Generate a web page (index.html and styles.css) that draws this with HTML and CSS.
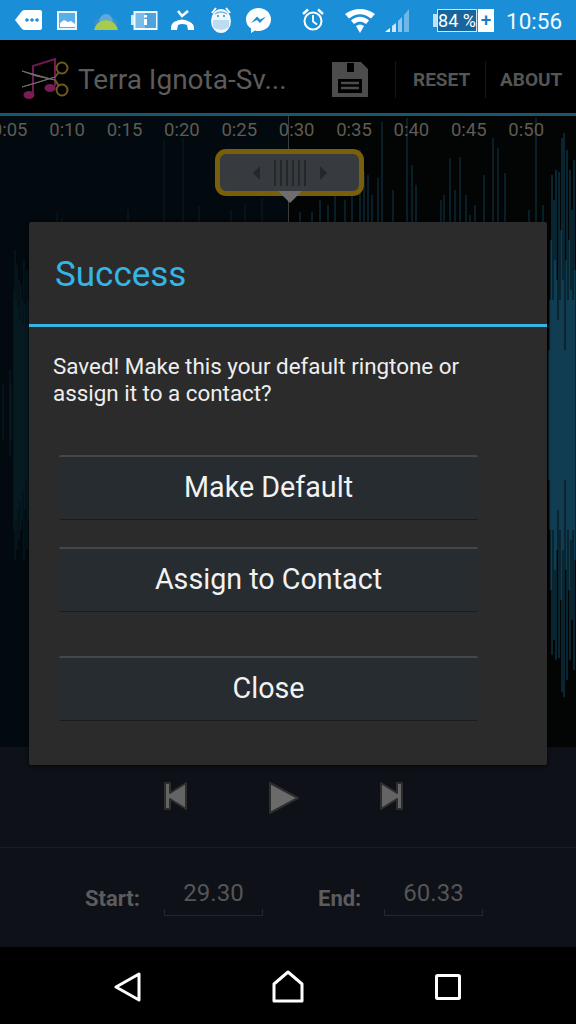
FILE: index.html
```html
<!DOCTYPE html>
<html lang="en">
<head>
  <meta charset="UTF-8">
  <meta name="viewport" content="width=device-width, initial-scale=1.0">
  <title>Ringtone Maker</title>
  <link rel="stylesheet" href="styles.css">
</head>
<body>
  <div class="status">
    <svg width="42" height="40" viewBox="0 0 42 40"><path d="M0 20L7 11Q8 10 10 10H25Q27 10 27 12V28Q27 30 25 30H10Q8 30 7 29Z" fill="#fff"/><circle cx="12" cy="20" r="1.8" fill="#1a8fd8"/><circle cx="17" cy="20" r="1.8" fill="#1a8fd8"/><circle cx="22" cy="20" r="1.8" fill="#1a8fd8"/></svg>
    <svg width="36" height="40" viewBox="0 0 36 40"><rect x="1" y="12" width="18" height="17" fill="#58aee6" stroke="#eaf5fc" stroke-width="2"/><path d="M3 26V23L7 20L11 22L14 21L18 24V27H3Z" fill="#fff"/></svg>
    <svg width="38" height="40" viewBox="0 0 38 40"><path d="M6 22Q7 14 13 14Q19 14 20 22Z" fill="#5fa8d8"/><path d="M1 22L6 18V25H2ZM25 22L20 18V25H24Z" fill="#3e90c4"/><path d="M1 30Q3 21 13 20Q23 21 25 30Z" fill="#a6cb4e"/></svg>
    <svg width="39" height="40" viewBox="0 0 39 40"><path d="M0 15H3V25H0Z" fill="#cfe8f8"/><rect x="3.500" y="12" width="22" height="17" fill="#78bcea" stroke="#f2f9fd" stroke-width="2"/><rect x="14" y="13" width="11" height="15" fill="#4da3dd"/><rect x="13" y="19" width="3" height="6" fill="#fff"/><rect x="13" y="15" width="3" height="2.500" fill="#fff"/></svg>
    <svg width="40" height="40" viewBox="0 0 40 40"><path d="M8 11L12 16L18 11" fill="none" stroke="#fff" stroke-width="2.500"/><path d="M1 28Q1 24 4 22Q12 17 20 22Q24 24 24 28V30H18L17 25Q12 23 8 25L7 30H1Z" fill="#fff"/></svg>
    <svg width="36" height="40" viewBox="0 0 36 40"><ellipse cx="11" cy="21" rx="10" ry="12" fill="#f2f8fc"/><path d="M2 13L6 8M20 13L16 8" stroke="#fff" stroke-width="2"/><path d="M3 20H19V27Q11 33 3 27Z" fill="#bcdcf2"/><path d="M5 14Q11 10 17 14" fill="none" stroke="#7fbce6" stroke-width="1.500"/><circle cx="8" cy="16" r="1" fill="#1a8fd8"/><circle cx="14" cy="16" r="1" fill="#1a8fd8"/></svg>
    <svg width="56" height="40" viewBox="0 0 56 40"><path d="M12.500 8C19.500 8 25 13 25 19.500C25 26 19.500 31 12.500 31Q10.500 31 9 30.500L5 33V28.500Q0 25 0 19.500C0 13 5.500 8 12.500 8Z" fill="#fff"/><path d="M5 23L11 16.500L14 19.500L20 16.500L14 23L11 20Z" fill="#1a8fd8"/></svg>
    <svg width="43" height="40" viewBox="0 0 43 40"><circle cx="11" cy="21" r="8.500" fill="none" stroke="#fff" stroke-width="2"/><path d="M11 15V21.500L15 24.500" fill="none" stroke="#fff" stroke-width="1.800"/><path d="M1 14L6 9.500M21 14L16 9.500" stroke="#fff" stroke-width="2.400"/></svg>
    <svg width="40" height="40" viewBox="0 0 40 40"><path d="M0 14Q15 4 30 14L26 18.500Q15 10 4 18.500Z" fill="#fff"/><path d="M6 20.500Q15 13 24 20.500L21 24Q15 19 9 24Z" fill="#fff"/><path d="M11 26Q15 23 19 26L15 33Z" fill="#fff"/></svg>
    <svg width="48" height="40" viewBox="0 0 48 40"><path d="M0 32L5 28V32Z" fill="#fff"/><path d="M7 26L11 23V32H7Z" fill="#cfe6f6"/><path d="M13 21L17 17V32H13Z" fill="#8cc6ec"/><path d="M19 15L24 9V32H19Z" fill="#6fb7e6"/></svg>
    <div class="battery">
      <span class="batt-nub"></span>
      <span class="batt-level">84 %</span>
      <span class="batt-plus">+</span>
    </div>
    <span class="clock">10:56</span>
  </div>

  <div class="actionbar">
    <svg class="app-icon" width="48" height="42" viewBox="0 0 48 42"><path d="M11 35V8L33 1V28" fill="none" stroke="#6d1a4c" stroke-width="2"/><ellipse cx="7" cy="37" rx="5.500" ry="4" fill="#7a1c55"/><ellipse cx="28" cy="30" rx="5.500" ry="4" fill="#7a1c55"/><path d="M0 13L33 22L14 18ZM0 29L33 19L14 25Z" fill="#6e6e6e" stroke="#6e6e6e"/><path d="M33 22L37 28M33 19L37 14" stroke="#6e5a1e" stroke-width="2"/><circle cx="40" cy="10" r="5.500" fill="none" stroke="#6e5a1e" stroke-width="2"/><circle cx="40" cy="32" r="5.500" fill="none" stroke="#6e5a1e" stroke-width="2"/></svg>
    <span class="app-title">Terra Ignota-Sv...</span>
    <svg class="save-icon" width="36" height="36" viewBox="0 0 36 36"><path d="M0 1H29L36 8V36H0ZM15 2V11H22V2ZM6 18V32H30V18Z" fill="#4c4c4c" fill-rule="evenodd"/><path d="M9 22H27M9 27H27" stroke="#4c4c4c" stroke-width="2.500"/></svg>
    <div class="act-btn act-reset">RESET</div>
    <div class="act-btn act-about">ABOUT</div>
  </div>

  <div class="wave">
    <svg class="wave-bars" width="576" height="631" viewBox="0 116 576 631">
      <path class="bars-faint" d="M3 385V440M10 370V455M11 385V440M14 290V530M15 250V560M16 300V520M17 265V550M18 310V510M19 280V540M20 320V500M21 285V530M22 300V520M23 325V490M24 260V560M25 305V510M26 330V480M27 270V550M28 300V520M164 140V222M183 138V222M57 213V222M62 218V222M128 210V222M199 206V222M231 210V222M245 205V222M262 198V222"/>
      <path class="bars-low" d="M300 212V222M312 212V222M320 200V222M328 205V222M335 190V222M345 200V222M352 195V222M360 150V222M364 172V222M368 175V222M372 195V222M378 178V222M382 122V222"/>
      <path class="bars-low" d="M393 190V222M407 118V222M412 165V222M416 185V222M441 200V222M444 195V222M450 158V222M455 190V222M460 157V222M466 195V222M470 215V222M475 205V222M484 175V222M493 138V222M498 148V222M505 173V222M529 210V222M536 118V222M543 205V222"/>
      <path class="bars" d="M549 350V480M550 300V530M551 240V590M552 175V655M553 300V530M554 200V640M555 260V570M556 170V660M557 280V550M558 320V510M559 172V658M560 300V530M561 230V600M562 138V692M563 280V550M564 133V697M565 350V480M566 260V570M567 150V680M568 300V530M569 240V590M570 170V660M571 290V540M572 210V620M573 300V530M574 160V670M575 270V560"/>
      <path class="cursor" d="M288.500 116V222"/>
    </svg>

    <div class="ticks">
      <span>0:05</span><span>0:10</span><span>0:15</span><span>0:20</span><span>0:25</span>
      <span>0:30</span><span>0:35</span><span>0:40</span><span>0:45</span><span>0:50</span>
    </div>

    <div class="thumb">
      <span class="thumb-left"></span>
      <span class="grip"><i></i><i></i><i></i><i></i><i></i><i></i></span>
      <span class="thumb-right"></span>
    </div>
  </div>

  <div class="controls">
    <svg width="26" height="30" viewBox="0 0 26 30"><path d="M2 2H7V12L23 2V28L7 18V28H2Z" fill="#646464" stroke="#2d2d2d" stroke-width="2" stroke-linejoin="round"/></svg>
    <svg width="32" height="34" viewBox="0 0 32 34"><path d="M2 2L30 17L2 32Z" fill="#6a6a6a" stroke="#2d2d2d" stroke-width="2" stroke-linejoin="round"/></svg>
    <svg width="26" height="30" viewBox="0 0 26 30"><path d="M24 2H19V12L3 2V28L19 18V28H24Z" fill="#646464" stroke="#2d2d2d" stroke-width="2" stroke-linejoin="round"/></svg>
  </div>

  <div class="times">
    <span class="time-label time-start">Start:</span>
    <span class="time-val">29.30</span>
    <span class="time-label time-end">End:</span>
    <span class="time-val">60.33</span>
  </div>

  <div class="navbar">
    <svg width="28" height="30" viewBox="0 0 28 30"><path d="M2 15L25 2V28Z" fill="none" stroke="#fff" stroke-width="3" stroke-linejoin="round"/></svg>
    <svg width="32" height="33" viewBox="0 0 32 33"><path d="M2 31V14L16 2L30 14V31Z" fill="none" stroke="#fff" stroke-width="3" stroke-linejoin="round"/></svg>
    <svg width="26" height="26" viewBox="0 0 26 26"><rect x="1.500" y="1.500" width="23" height="23" fill="none" stroke="#fff" stroke-width="3" rx="1"/></svg>
  </div>

  <div class="dialog">
    <div class="dialog-title">Success</div>
    <p class="dialog-msg">Saved! Make this your default ringtone or assign it to a contact?</p>
    <button class="dlg-btn btn-default">Make Default</button>
    <button class="dlg-btn btn-contact">Assign to Contact</button>
    <button class="dlg-btn btn-close">Close</button>
  </div>
</body>
</html>
```

FILE: styles.css
```css
* {
  box-sizing: border-box;
}

body {
  margin: 0;
  width: 576px;
  height: 1024px;
  position: relative;
  overflow: hidden;
  display: flex;
  flex-direction: column;
  background: #000;
  font-family: Roboto, "Liberation Sans", sans-serif;
}

svg {
  display: block;
  flex: none;
}

/* status bar */
.status {
  height: 40px;
  flex: none;
  display: flex;
  align-items: center;
  padding-left: 15px;
  background: #1a8fd8;
}

.battery {
  width: 74px;
  height: 23px;
  display: flex;
  align-items: stretch;
}

.batt-nub {
  width: 4px;
  margin: 5px 0;
  background: #bfe0f5;
}

.batt-level {
  width: 40px;
  border: 1px solid #cfe6f6;
  background: #17659c;
  color: #fff;
  font-size: 18px;
  line-height: 21px;
  text-align: center;
  white-space: nowrap;
}

.batt-plus {
  width: 16px;
  margin-left: 1px;
  background: #fff;
  color: #1a7cc0;
  font-size: 19px;
  font-weight: 500;
  line-height: 22px;
  text-align: center;
}

.clock {
  margin-left: -1px;
  padding-top: 2px;
  color: #f4fafe;
  font-size: 22.500px;
}

/* action bar */
.actionbar {
  height: 76px;
  flex: none;
  display: flex;
  align-items: center;
  padding: 5px 0 0 22px;
  background: #000;
  border-bottom: 3px solid #1a5672;
}

.app-title {
  width: 254px;
  margin-left: 8px;
  color: #5c5c5c;
  font-size: 28px;
  white-space: nowrap;
}

.save-icon {
  margin-right: 27px;
}

.act-btn {
  height: 37px;
  border-left: 1px solid #161616;
  color: #555;
  font-size: 19px;
  font-weight: 700;
  line-height: 37px;
}

.act-reset {
  width: 90px;
  padding-left: 17px;
}

.act-about {
  padding-left: 14px;
}

/* waveform */
.wave {
  height: 631px;
  flex: none;
  position: relative;
  background: linear-gradient(to right, #02090f 288px, #030404 288px);
}

.wave-bars {
  position: absolute;
  left: 0;
  top: 0;
}

.bars {
  stroke: #103d52;
  stroke-width: 1.200;
  fill: none;
}

.bars-low {
  stroke: #0f3a4e;
  stroke-width: 1;
  fill: none;
}

.bars-faint {
  stroke: #082029;
  stroke-width: 1;
  fill: none;
}

.cursor {
  stroke: #3d3d3d;
  stroke-width: 1;
}

.ticks {
  position: relative;
  display: flex;
  margin-left: -19px;
  padding-top: 3px;
}

.ticks span {
  width: 57.400px;
  flex: none;
  color: #5e5c52;
  font-size: 18.500px;
  line-height: 23px;
  text-align: center;
}

.thumb {
  position: absolute;
  left: 215px;
  top: 33px;
  width: 149px;
  height: 47px;
  display: flex;
  align-items: center;
  justify-content: center;
  gap: 14px;
  background: #373b40;
  border: 5px solid #7a5f0a;
  border-radius: 11px;
}

.thumb::after {
  content: "";
  position: absolute;
  left: 58px;
  top: 37px;
  border-left: 12px solid transparent;
  border-right: 12px solid transparent;
  border-top: 12px solid #6e6e6e;
}

.thumb-left {
  border-top: 7px solid transparent;
  border-bottom: 7px solid transparent;
  border-right: 7px solid #25282b;
}

.thumb-right {
  border-top: 7px solid transparent;
  border-bottom: 7px solid transparent;
  border-left: 7px solid #25282b;
}

.grip {
  display: flex;
  gap: 4px;
}

.grip i {
  width: 2px;
  height: 26px;
  background: #25282b;
}

/* player controls */
.controls {
  height: 101px;
  flex: none;
  display: flex;
  align-items: flex-start;
  padding: 34px 0 0 163px;
  background: #0e1118;
  border-bottom: 1px solid #1a1c22;
}

.controls svg:nth-child(2) {
  margin: 0 78px 0 79px;
}

.times {
  height: 99px;
  flex: none;
  display: flex;
  align-items: flex-start;
  background: #0e1118;
  padding: 29px 0 0 85px;
}

.time-label {
  margin-top: 10px;
  color: #5c5c5c;
  font-size: 22px;
  font-weight: 700;
  line-height: 24px;
}

.time-start {
  width: 79px;
}

.time-end {
  width: 66px;
  margin-left: 55px;
}

.time-val {
  width: 99px;
  color: #555;
  font-size: 24px;
  line-height: 32px;
  text-align: center;
}

.time-val::after {
  content: "";
  display: block;
  height: 6px;
  border: 1px solid #26272c;
  border-top: none;
}

/* nav bar */
.navbar {
  height: 77px;
  flex: none;
  display: flex;
  align-items: center;
  padding: 2px 0 0 114px;
  background: #000;
}

.navbar svg:nth-child(2) {
  margin: 0 131px 0 130px;
}

/* dialog */
.dialog {
  position: absolute;
  left: 29px;
  top: 222px;
  width: 518px;
  height: 543px;
  background: #2b2b2b;
  border-radius: 2px;
  box-shadow: 0 1px 4px rgba(0, 0, 0, 0.7);
}

.dialog-title {
  height: 105px;
  padding: 2px 0 0 26px;
  display: flex;
  align-items: center;
  color: #33b5e5;
  font-size: 35px;
  border-bottom: 3px solid #33b5e5;
}

.dialog-msg {
  margin: 0;
  padding: 26px 60px 0 24px;
  color: #eeeeee;
  font-size: 22.400px;
  line-height: 27px;
}

.dlg-btn {
  display: block;
  width: 419px;
  height: 65px;
  margin-left: 30px;
  padding: 0 0 2px;
  background: #272c30;
  border: none;
  border-top: 2px solid #45484a;
  border-bottom: 1px solid #1c1c1c;
  border-radius: 2px;
  color: #f2f2f2;
  font-family: inherit;
  font-size: 28.700px;
}

.btn-default {
  margin-top: 48px;
}

.btn-contact {
  margin-top: 27px;
}

.btn-close {
  margin-top: 44px;
}
```
